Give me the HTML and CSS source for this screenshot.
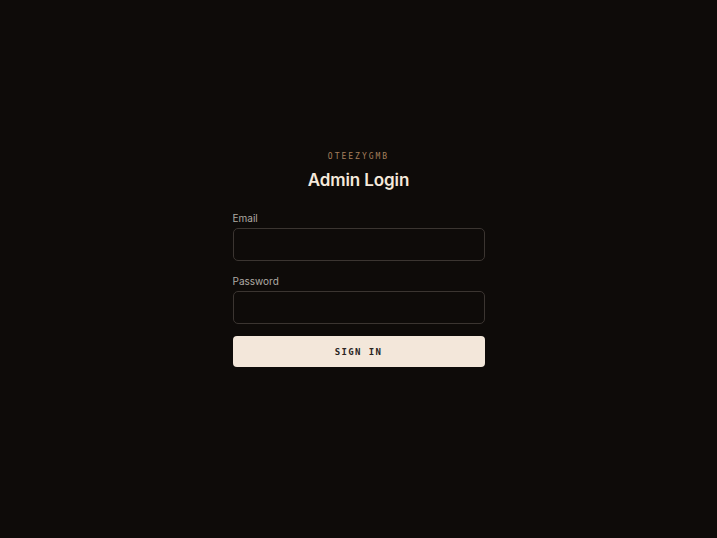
FILE: index.html
```html
<!DOCTYPE html>
<html>
<head>
<meta charset="utf-8">
<link rel="stylesheet" href="styles.css">
</head>
<body>
<main class="page">
  <form class="card">
    <div class="brand">OTEEZYGMB</div>
    <h1 class="title">Admin Login</h1>
    <label class="field">
      <span class="label">Email</span>
      <input class="input" type="email">
    </label>
    <label class="field">
      <span class="label">Password</span>
      <input class="input" type="password">
    </label>
    <button class="btn" type="button">SIGN IN</button>
  </form>
</main>
</body>
</html>
```
FILE: styles.css
```css
html, body {
  margin: 0;
  height: 100%;
  background: #0e0b09;
}
.page {
  height: 100%;
  display: flex;
  justify-content: center;
  align-items: flex-start;
  padding-top: 151px;
  box-sizing: border-box;
  font-family: Inter, "Noto Sans", sans-serif;
}
.card {
  width: 252px;
  display: flex;
  flex-direction: column;
}
.brand {
  font-family: "DejaVu Sans Mono", "Liberation Mono", monospace;
  font-size: 8px;
  letter-spacing: 2px;
  color: #a67f5c;
  text-align: center;
  line-height: 12px;
}
.title {
  margin: 4px 0 0;
  font-size: 17px;
  font-weight: 600;
  color: #f5e9db;
  text-align: center;
  line-height: 26px;
  letter-spacing: -0.1px;
}
.field {
  display: flex;
  flex-direction: column;
  margin-top: 18px;
}
.field + .field {
  margin-top: 13px;
}
.label {
  font-size: 10px;
  color: #afaaa4;
  line-height: 14px;
  margin-bottom: 3px;
}
.input {
  height: 33px;
  box-sizing: border-box;
  background: #0e0b09;
  border: 1px solid #3b3531;
  border-radius: 5px;
  outline: none;
  margin: 0;
}
.btn {
  margin-top: 12px;
  height: 31px;
  border: none;
  border-radius: 4px;
  background: #f3e7da;
  color: #2a241f;
  font-family: "DejaVu Sans Mono", "Liberation Mono", monospace;
  font-size: 9px;
  font-weight: 700;
  letter-spacing: 1.4px;
  padding: 0;
}
```
